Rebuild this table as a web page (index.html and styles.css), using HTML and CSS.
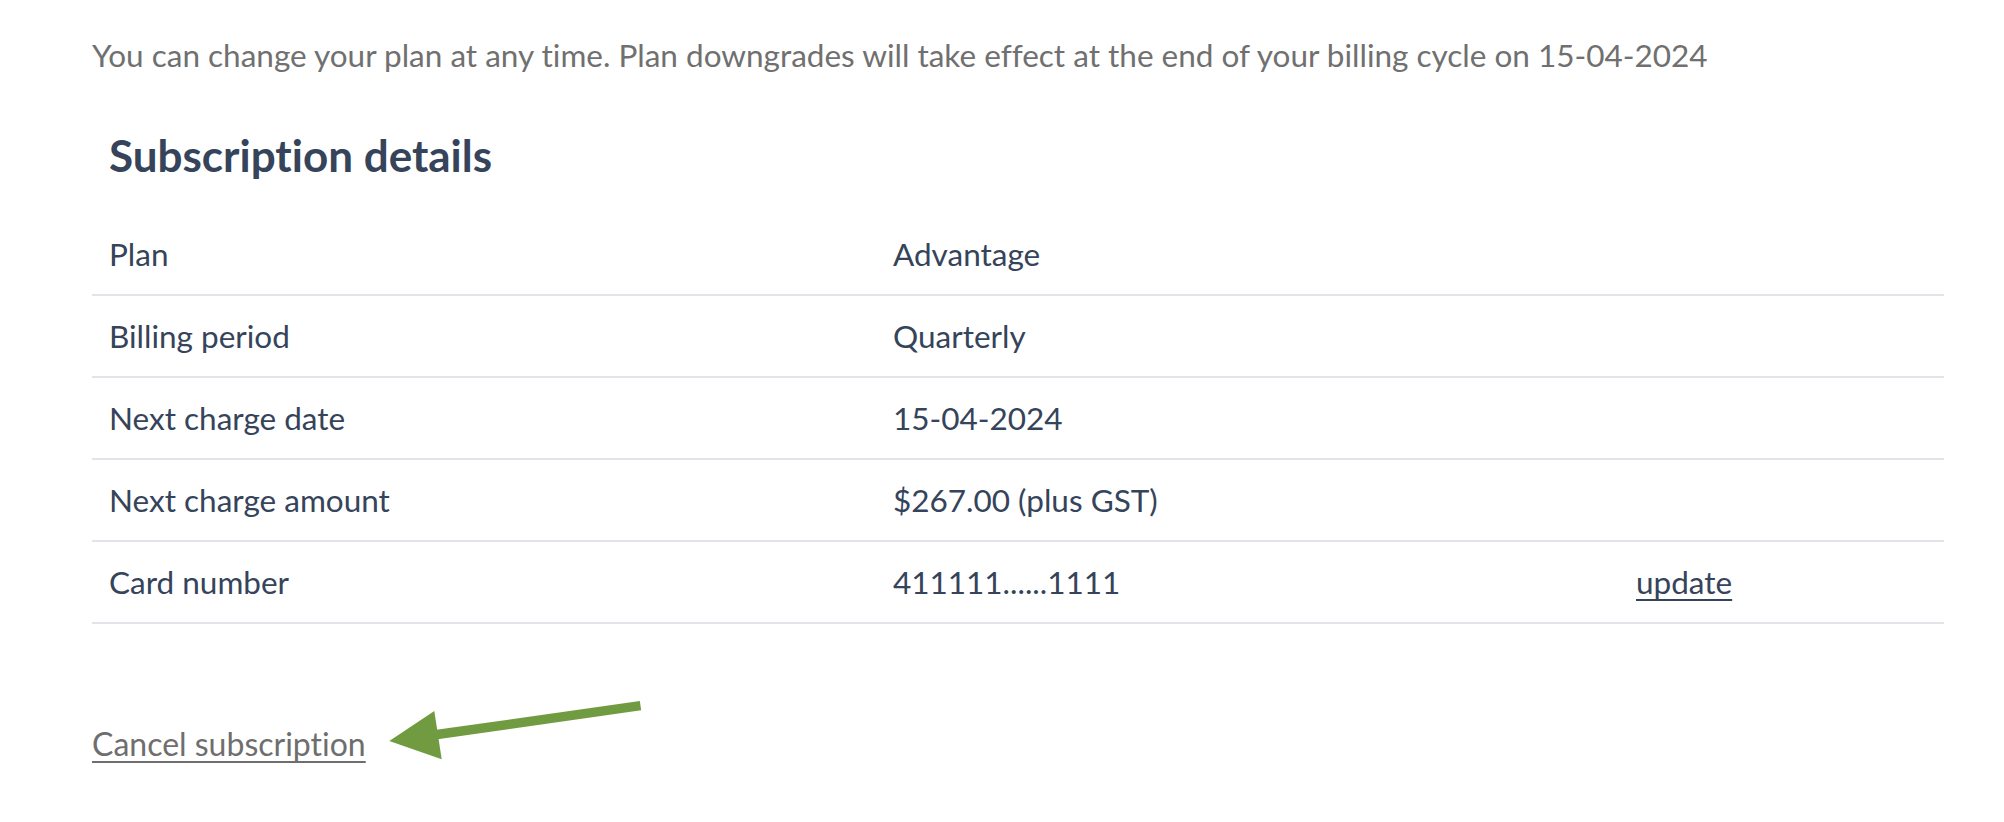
FILE: index.html
```html
<!DOCTYPE html>
<html lang="en">
<head>
<meta charset="utf-8">
<title>Subscription details</title>
<link rel="stylesheet" href="styles.css">
</head>
<body>
<main class="page">
  <p class="intro">You can change your plan at any time. Plan downgrades will take effect at the end of your billing cycle on 15-04-2024</p>
  <section class="details">
    <h2 class="details-title">Subscription details</h2>
    <div class="rows">
      <div class="row">
        <div class="cell label">Plan</div>
        <div class="cell value">Advantage</div>
        <div class="cell action"></div>
      </div>
      <div class="row">
        <div class="cell label">Billing period</div>
        <div class="cell value">Quarterly</div>
        <div class="cell action"></div>
      </div>
      <div class="row">
        <div class="cell label">Next charge date</div>
        <div class="cell value">15-04-2024</div>
        <div class="cell action"></div>
      </div>
      <div class="row">
        <div class="cell label">Next charge amount</div>
        <div class="cell value">$267.00 (plus GST)</div>
        <div class="cell action"></div>
      </div>
      <div class="row">
        <div class="cell label">Card number</div>
        <div class="cell value">411111......1111</div>
        <div class="cell action"><a href="#" class="link">update</a></div>
      </div>
    </div>
  </section>
  <div class="cancel-row">
    <a href="#" class="cancel-link">Cancel subscription</a>
    <svg class="arrow" width="260" height="68" viewBox="0 0 260 68" aria-hidden="true">
      <line x1="52" y1="38.5" x2="255.5" y2="9.7" stroke="#719b40" stroke-width="9.4"/>
      <polygon points="4.3,45 49.3,15 56.7,63.3" fill="#719b40"/>
    </svg>
  </div>
</main>
</body>
</html>
```

FILE: styles.css
```css
html, body {
  margin: 0;
  padding: 0;
  background: #ffffff;
}

body {
  font-family: Lato, "Open Sans", Arial, sans-serif;
  color: #35445a;
  font-variant-ligatures: none;
}

.page {
  padding: 33px 60px 0 92px;
}

.intro {
  margin: 0;
  font-size: 31.5px;
  line-height: 45px;
  color: #707070;
}

.details {
  margin-top: 49px;
}

.details-title {
  margin: 0;
  padding-left: 17px;
  font-size: 44px;
  font-weight: 700;
  line-height: 56px;
  color: #35445a;
}

.rows {
  margin-top: 31px;
}

.row {
  display: grid;
  grid-template-columns: 784px 743px 1fr;
  height: 82px;
  align-items: center;
  border-bottom: 2px solid #e1e4e8;
  box-sizing: border-box;
}

.cell {
  padding-left: 17px;
  font-size: 31.5px;
  line-height: 40px;
}

.link {
  color: #35445a;
  text-decoration: underline;
  text-decoration-thickness: 2px;
  text-underline-offset: 5px;
}

.cancel-row {
  display: flex;
  align-items: flex-start;
  margin-top: 72px;
}

.cancel-link {
  font-size: 32px;
  line-height: 40px;
  color: #6e6e6e;
  text-decoration: underline;
  text-decoration-thickness: 2px;
  text-underline-offset: 5px;
  margin-top: 28px;
}

.arrow {
  display: block;
  margin-left: 19px;
}
```
